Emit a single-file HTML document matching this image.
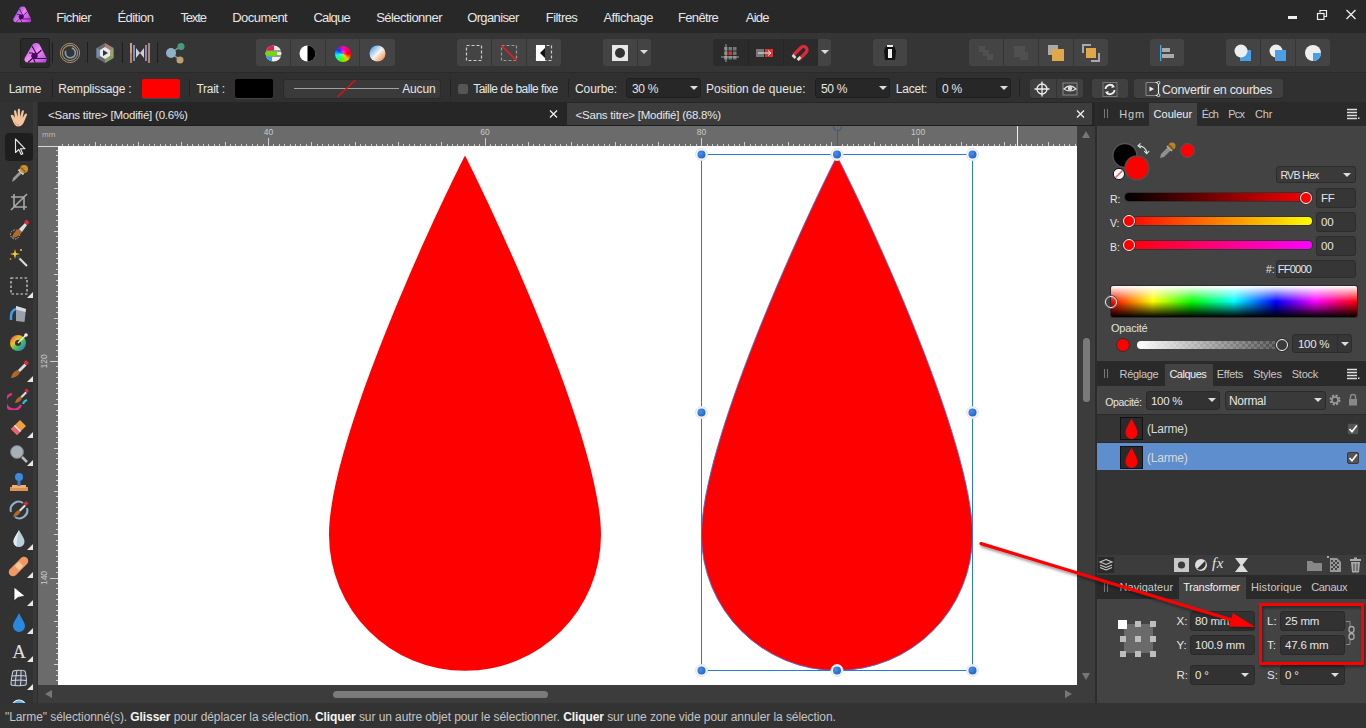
<!DOCTYPE html>
<html><head><meta charset="utf-8">
<style>
*{margin:0;padding:0;box-sizing:border-box}
html,body{width:1366px;height:728px;overflow:hidden;background:#2f2f2f;font-family:"Liberation Sans",sans-serif;color:#e6e6e6}
.a{position:absolute}
.t{position:absolute;white-space:nowrap;font-size:12px;line-height:14px}
#menu{left:0;top:0;width:1366px;height:33px;background:#282828}
#tb{left:0;top:33px;width:1366px;height:40px;background:#353535;border-bottom:1px solid #2a2a2a}
#ctx{left:0;top:73px;width:1366px;height:29px;background:#303030}
#tools{left:0;top:102px;width:37px;height:601px;background:#323232}
#tabs{left:38px;top:102px;width:1057px;height:24px;background:#262626}
#rtop{left:38px;top:126px;width:1039px;height:20px;background:#6b6b6b}
#rleft{left:38px;top:146px;width:20px;height:539px;background:#6b6b6b}
#canvas{left:58px;top:146px;width:1019px;height:539px;background:#fff;overflow:hidden}
#vs{left:1077px;top:126px;width:18px;height:577px;background:#3c3c3c}
#hs{left:38px;top:685px;width:1039px;height:18px;background:#3c3c3c}
#panel{left:1097px;top:102px;width:269px;height:601px;background:#434343}
#status{left:0;top:703px;width:1366px;height:25px;background:#333333}
.btn{position:absolute;background:#454545;border-radius:2px}
.grp{position:absolute;background:#444;border-radius:3px;overflow:hidden}
.dd{position:absolute;background:#272727;border:1px solid #1f1f1f;border-radius:3px}
.sep{position:absolute;width:1px;background:#1e1e1e}
</style></head><body>
<div id="menu" class="a">
  <svg class="a" style="left:11px;top:4px" width="23" height="21" viewBox="0 0 28 26"><defs><linearGradient id="lg" x1="0" y1="0.2" x2="1" y2="0.8"><stop offset="0" stop-color="#5a3ae0"/><stop offset="0.5" stop-color="#f07cf0"/><stop offset="1" stop-color="#b040d8"/></linearGradient></defs>
<path d="M10.5 4.5 Q11.5 3 13.5 3 L15 3 Q16.5 3 17.5 4.5 L24.5 18 Q25.5 20.5 23.5 22.5 L6 22.5 Q3 22.5 2.5 20 Q2 19 3 17.5Z" fill="url(#lg)"/>
<path d="M10 6 L15 15 M19.5 10 L6 22.5 M14 18.5 L24.6 18.5 M7 13 L11 13 M11.4 18.6 L13.2 22.5" stroke="#3a0650" stroke-width="1.1" opacity="0.8"/>
<path d="M10.5 13 L14 13 L16 16 L14 19 L10.5 19 L9 16Z" fill="#3a0860"/></svg>
  <span class="t" style="left:56.2px;top:11px;font-size:13px;letter-spacing:-0.61px">Fichier</span>
  <span class="t" style="left:117.4px;top:11px;font-size:13px;letter-spacing:-0.53px">Édition</span>
  <span class="t" style="left:180.4px;top:11px;font-size:13px;letter-spacing:-1.15px">Texte</span>
  <span class="t" style="left:232.2px;top:11px;font-size:13px;letter-spacing:-0.53px">Document</span>
  <span class="t" style="left:313.4px;top:11px;font-size:13px;letter-spacing:-0.76px">Calque</span>
  <span class="t" style="left:376.2px;top:11px;font-size:13px;letter-spacing:-0.54px">Sélectionner</span>
  <span class="t" style="left:467.2px;top:11px;font-size:13px;letter-spacing:-0.63px">Organiser</span>
  <span class="t" style="left:545.8px;top:11px;font-size:13px;letter-spacing:-0.56px">Filtres</span>
  <span class="t" style="left:603.4px;top:11px;font-size:13px;letter-spacing:-0.49px">Affichage</span>
  <span class="t" style="left:678.0px;top:11px;font-size:13px;letter-spacing:-0.67px">Fenêtre</span>
  <span class="t" style="left:745.8px;top:11px;font-size:13px;letter-spacing:-0.79px">Aide</span>
  <div class="a" style="left:1288px;top:16px;width:9px;height:3px;background:#f0f0f0"></div>
  <svg class="a" style="left:1316px;top:9px" width="12" height="11" viewBox="0 0 12 11"><path d="M4 3.5 V1.5 H10.5 V7.5 H8" fill="none" stroke="#eee" stroke-width="1.2"/><rect x="1.5" y="4.5" width="6.5" height="6" fill="none" stroke="#eee" stroke-width="1.2"/></svg>
  <svg class="a" style="left:1345px;top:9px" width="12" height="11" viewBox="0 0 12 11"><path d="M1.5 1 L10.5 10 M10.5 1 L1.5 10" stroke="#eee" stroke-width="1.3"/></svg>
</div>
<div id="tb" class="a">
  <!-- persona -->
  <div class="a" style="left:20px;top:5px;width:30px;height:30px;background:#2a2a2a;border:1px solid #1f1f1f;border-radius:3px"></div>
  <svg class="a" style="left:22px;top:7px" width="28" height="26" viewBox="0 0 28 26"><defs><linearGradient id="pg" x1="0" y1="0" x2="1" y2="1"><stop offset="0" stop-color="#a040e0"/><stop offset="0.5" stop-color="#f090f0"/><stop offset="1" stop-color="#b040d8"/></linearGradient></defs>
<path d="M10.5 4.5 Q11.5 3 13.5 3 L15 3 Q16.5 3 17.5 4.5 L24.5 18 Q25.5 20.5 23.5 22.5 L6 22.5 Q3 22.5 2.5 20 Q2 19 3 17.5Z" fill="url(#pg)"/>
<path d="M10 6 L15 15 M19.5 10 L6 22.5 M14 18.5 L24.6 18.5 M7 13 L11 13 M11.4 18.6 L13.2 22.5" stroke="#3a0650" stroke-width="1.1"/>
<path d="M10.5 13 L14 13 L16 16 L14 19 L10.5 19 L9 16Z" fill="#4a0a62"/></svg>
  <div class="sep" style="left:52px;top:9px;height:21px"></div>
  <svg class="a" style="left:59px;top:9px" width="22" height="22" viewBox="0 0 22 22"><circle cx="11" cy="11" r="9.6" fill="none" stroke="#b08878" stroke-width="1"/><circle cx="11" cy="11" r="7.6" fill="none" stroke="#9a9460" stroke-width="1.1"/><path d="M6.8 8.8 A5 5 0 1 0 12.8 6" fill="none" stroke="#80a0c0" stroke-width="1.6"/></svg>
  <div class="sep" style="left:87px;top:9px;height:21px"></div>
  <svg class="a" style="left:95px;top:9px" width="20" height="22" viewBox="0 0 20 22"><path d="M10 1 L18.5 6 L18.5 16 L10 21 L1.5 16 L1.5 6Z" fill="#6a6a6a"/><path d="M10 1 L18.5 6 L15 8 L10 5Z" fill="#b07a78"/><path d="M18.5 6 L18.5 16 L15 14 L15 8Z" fill="#a0a070"/><path d="M18.5 16 L10 21 L10 17 L15 14Z" fill="#80a060"/><path d="M1.5 6 L1.5 16 L5 14 L5 8Z" fill="#7090b8"/><path d="M5 8 L10 5 L15 8 L15 14 L10 17 L5 14Z" fill="#e8e8e8"/><path d="M8 8 L13 11 L8 14Z" fill="#333"/></svg>
  <div class="sep" style="left:122px;top:9px;height:21px"></div>
  <svg class="a" style="left:129px;top:9px" width="22" height="22" viewBox="0 0 22 22"><rect x="1" y="1" width="2" height="20" fill="#b88070"/><rect x="1" y="1" width="2" height="10" fill="#c8a090"/><rect x="19" y="1" width="2" height="20" fill="#b88070"/><rect x="4" y="3" width="2" height="16" fill="#8888c0"/><rect x="16" y="3" width="2" height="16" fill="#8888c0"/><path d="M7 6 L11 11 L7 16Z M15 6 L11 11 L15 16Z" fill="#d0d0d0"/></svg>
  <div class="sep" style="left:157px;top:9px;height:21px"></div>
  <svg class="a" style="left:164px;top:9px" width="22" height="22" viewBox="0 0 22 22"><path d="M7 11 L17 4 M7 11 L16 18" stroke="#8aa090" stroke-width="1.5"/><circle cx="7" cy="11" r="5" fill="#90b0c8"/><circle cx="17" cy="4.5" r="3.5" fill="#4a9a80"/><circle cx="16" cy="18" r="3.5" fill="#c0a070"/></svg>

  <!-- color group -->
  <div class="grp" style="left:256px;top:6px;width:139px;height:27px"></div>
  <div class="sep" style="left:290px;top:6px;height:27px;background:#363636"></div>
  <div class="sep" style="left:325px;top:6px;height:27px;background:#363636"></div>
  <div class="sep" style="left:359px;top:6px;height:27px;background:#363636"></div>
  <svg class="a" style="left:265px;top:12px" width="17" height="17" viewBox="0 0 17 17"><defs><clipPath id="cc"><circle cx="8.5" cy="8.5" r="8"/></clipPath></defs><g clip-path="url(#cc)"><rect x="0" y="0" width="17" height="5.5" fill="#eee"/><rect x="0" y="0" width="9" height="5.5" fill="#f01850"/><rect x="0" y="6.5" width="17" height="4" fill="#eee"/><rect x="0" y="6.5" width="12" height="4" fill="#70dd00"/><rect x="0" y="11.5" width="17" height="6" fill="#eee"/><rect x="0" y="11.5" width="7" height="6" fill="#30a0f0"/></g></svg>
  <svg class="a" style="left:299px;top:12px" width="17" height="17" viewBox="0 0 17 17"><circle cx="8.5" cy="8.5" r="8" fill="#fff"/><path d="M8.5 0.5 A8 8 0 0 1 8.5 16.5Z" fill="#000"/></svg>
  <div class="a" style="left:334.5px;top:12.5px;width:16px;height:16px;border-radius:50%;background:radial-gradient(circle,rgba(255,255,255,0.35) 0,rgba(255,255,255,0) 40%),conic-gradient(#ff00c0,#ff0000 25%,#ffc000 38%,#40ff00 55%,#00ffff 72%,#0040ff 85%,#ff00c0)"></div>
  <svg class="a" style="left:369px;top:12px" width="17" height="17" viewBox="0 0 17 17"><defs><linearGradient id="bw" x1="0" y1="0" x2="1" y2="1"><stop offset="0" stop-color="#3090e0"/><stop offset="0.5" stop-color="#f4f4f4"/><stop offset="1" stop-color="#f07820"/></linearGradient></defs><circle cx="8.5" cy="8.5" r="8" fill="url(#bw)"/></svg>

  <!-- selection group -->
  <div class="grp" style="left:457px;top:6px;width:104px;height:27px"></div>
  <div class="sep" style="left:491px;top:6px;height:27px;background:#363636"></div>
  <div class="sep" style="left:526px;top:6px;height:27px;background:#363636"></div>
  <svg class="a" style="left:465px;top:11px" width="18" height="18" viewBox="0 0 18 18"><rect x="1.5" y="1.5" width="15" height="15" fill="none" stroke="#ccc" stroke-width="1.2" stroke-dasharray="3 2"/></svg>
  <svg class="a" style="left:500px;top:11px" width="18" height="18" viewBox="0 0 18 18"><rect x="1.5" y="1.5" width="15" height="15" fill="none" stroke="#999" stroke-width="1.2" stroke-dasharray="3 2"/><path d="M1 1 L17 17" stroke="#e02020" stroke-width="1.6"/></svg>
  <svg class="a" style="left:535px;top:11px" width="18" height="18" viewBox="0 0 18 18"><rect x="1.5" y="1.5" width="15" height="15" fill="none" stroke="#ccc" stroke-width="1.2" stroke-dasharray="3 2"/><rect x="1" y="1" width="9" height="16" fill="#fff"/><path d="M10 4 L5 9 L10 14Z" fill="#111"/></svg>

  <!-- mode group -->
  <div class="grp" style="left:603px;top:6px;width:48px;height:27px"></div>
  <div class="sep" style="left:637px;top:6px;height:27px;background:#363636"></div>
  <svg class="a" style="left:611px;top:11px" width="18" height="18" viewBox="0 0 18 18"><rect x="1" y="1" width="16" height="16" fill="#e8e8e8"/><circle cx="9" cy="9" r="5" fill="#333"/></svg>
  <svg class="a" style="left:640px;top:17px" width="8" height="5" viewBox="0 0 8 5"><path d="M0 0 L8 0 L4 4Z" fill="#ddd"/></svg>

  <!-- snapping group -->
  <div class="grp" style="left:713px;top:6px;width:118px;height:27px;background:#2b2b2b"></div>
  <div class="a" style="left:818px;top:6px;width:13px;height:27px;background:#444;border-radius:0 3px 3px 0"></div>
  <div class="sep" style="left:748px;top:6px;height:27px;background:#262626"></div>
  <div class="sep" style="left:783px;top:6px;height:27px;background:#262626"></div>
  <svg class="a" style="left:721px;top:11px" width="18" height="18" viewBox="0 0 18 18"><g fill="#777"><rect x="3" y="3" width="3.5" height="3.5"/><rect x="7.5" y="3" width="3.5" height="3.5"/><rect x="12" y="3" width="3.5" height="3.5"/><rect x="3" y="7.5" width="3.5" height="3.5"/><rect x="12" y="7.5" width="3.5" height="3.5"/><rect x="3" y="12" width="3.5" height="3.5"/><rect x="7.5" y="12" width="3.5" height="3.5"/><rect x="12" y="12" width="3.5" height="3.5"/></g><rect x="7.5" y="7.5" width="3.5" height="3.5" fill="#e03030"/><path d="M5 0 L5 18 M0 13 L18 13" stroke="#bbb" stroke-width="0.8"/></svg>
  <svg class="a" style="left:755px;top:12px" width="20" height="16" viewBox="0 0 20 16"><rect x="1" y="4" width="8" height="8" fill="#777"/><rect x="10" y="4" width="8" height="8" fill="#e03030"/><path d="M3 8 L15 8" stroke="#eee" stroke-width="1"/><path d="M13 5.5 L16 8 L13 10.5" fill="none" stroke="#eee" stroke-width="1"/></svg>
  <svg class="a" style="left:791px;top:11px" width="19" height="19" viewBox="0 0 19 19"><path d="M3.5 14 L11 6.5 A3.5 3.5 0 0 1 16 11.5 L8.5 19" fill="none" stroke="#e02838" stroke-width="3.2" transform="translate(-1,-3)"/><path d="M2 12.5 L5 15.5 M7 17.5 L10 14.5" stroke="#ddd" stroke-width="2.5" transform="translate(-0.5,-1.5)"/></svg>
  <svg class="a" style="left:821px;top:17px" width="8" height="5" viewBox="0 0 8 5"><path d="M0 0 L8 0 L4 4Z" fill="#ddd"/></svg>

  <div class="grp" style="left:873px;top:6px;width:34px;height:27px"></div>
  <svg class="a" style="left:882px;top:10px" width="16" height="19" viewBox="0 0 16 19"><path d="M4 3 L12 3 L14 8 L13 17 L3 17 L2 8Z" fill="#111"/><path d="M5 2 L11 2 L11 4 L5 4Z" fill="#eee"/><path d="M6 6 L10 6 L10 15 L6 15Z" fill="#eee"/></svg>

  <!-- arrange group -->
  <div class="grp" style="left:969px;top:6px;width:139px;height:27px"></div>
  <div class="sep" style="left:1003px;top:6px;height:27px;background:#363636"></div>
  <div class="sep" style="left:1038px;top:6px;height:27px;background:#363636"></div>
  <div class="sep" style="left:1073px;top:6px;height:27px;background:#363636"></div>
  <svg class="a" style="left:977px;top:11px" width="18" height="18" viewBox="0 0 18 18"><g fill="#505050"><rect x="2" y="2" width="6" height="6"/><rect x="6" y="6" width="6" height="6"/><rect x="10" y="10" width="6" height="6"/></g></svg>
  <svg class="a" style="left:1012px;top:11px" width="18" height="18" viewBox="0 0 18 18"><g fill="#505050"><rect x="2" y="2" width="11" height="11"/><rect x="8" y="8" width="8" height="8"/></g></svg>
  <svg class="a" style="left:1047px;top:11px" width="18" height="18" viewBox="0 0 18 18"><rect x="1" y="1" width="10" height="10" fill="#aaa"/><rect x="5" y="5" width="12" height="12" fill="#e0a848"/></svg>
  <svg class="a" style="left:1082px;top:11px" width="18" height="18" viewBox="0 0 18 18"><path d="M1 9 L1 1 L9 1" fill="none" stroke="#aaa" stroke-width="2"/><path d="M17 9 L17 17 L9 17" fill="none" stroke="#aaa" stroke-width="2"/><rect x="4" y="4" width="10" height="10" fill="#e0a848"/></svg>

  <div class="grp" style="left:1150px;top:6px;width:34px;height:27px"></div>
  <svg class="a" style="left:1159px;top:11px" width="16" height="18" viewBox="0 0 16 18"><rect x="1" y="1" width="1.3" height="16" fill="#4aa8e8"/><rect x="3" y="4" width="8" height="4" fill="#aaa"/><rect x="3" y="10" width="12" height="4" fill="#aaa"/></svg>

  <!-- boolean group -->
  <div class="grp" style="left:1226px;top:6px;width:104px;height:27px"></div>
  <div class="sep" style="left:1260px;top:6px;height:27px;background:#363636"></div>
  <div class="sep" style="left:1295px;top:6px;height:27px;background:#363636"></div>
  <svg class="a" style="left:1234px;top:11px" width="18" height="18" viewBox="0 0 18 18"><rect x="6" y="6" width="11" height="11" fill="#4aa0e8"/><circle cx="7" cy="7" r="6.5" fill="#eee"/></svg>
  <svg class="a" style="left:1269px;top:11px" width="18" height="18" viewBox="0 0 18 18"><circle cx="7" cy="7" r="6.5" fill="#eee"/><rect x="6" y="6" width="11" height="11" fill="#4aa0e8"/></svg>
  <svg class="a" style="left:1304px;top:11px" width="18" height="18" viewBox="0 0 18 18"><circle cx="9" cy="9" r="8" fill="#eee"/><path d="M9 9 L17 9 A8 8 0 0 1 9 17Z" fill="#4aa0e8"/></svg>
</div>
<div id="ctx" class="a">
  <span class="t" style="left:8.8px;top:9px;font-size:12px;letter-spacing:-0.35px">Larme</span>
  <div class="sep" style="left:52px;top:6px;height:18px;background:#222"></div>
  <span class="t" style="left:58.2px;top:9px;font-size:12px;letter-spacing:-0.21px">Remplissage :</span>
  <div class="a" style="left:142px;top:6px;width:38px;height:19px;background:#ff0000;border-radius:2px;box-shadow:0 1px 0 #444"></div>
  <div class="sep" style="left:189px;top:6px;height:18px;background:#222"></div>
  <span class="t" style="left:196.4px;top:9px;font-size:12px;letter-spacing:-0.26px">Trait :</span>
  <div class="a" style="left:235px;top:6px;width:38px;height:19px;background:#000;border-radius:2px;box-shadow:0 1px 0 #444"></div>
  <div class="a" style="left:283px;top:6px;width:158px;height:20px;background:#3a3a3a;border:1px solid #2a2a2a;border-radius:3px"></div>
  <div class="a" style="left:294px;top:15px;width:105px;height:1px;background:#a0a0a0"></div>
  <svg class="a" style="left:336px;top:6px" width="21" height="19" viewBox="0 0 21 19"><path d="M1.5 18 L19.5 1" stroke="#e01010" stroke-width="1.5"/></svg>
  <span class="t" style="left:402.2px;top:9px;font-size:12px;letter-spacing:-0.15px">Aucun</span>
  <div class="sep" style="left:450px;top:6px;height:18px;background:#222"></div>
  <div class="a" style="left:458px;top:11px;width:10px;height:10px;background:#555;border-radius:2px"></div>
  <span class="t" style="left:473.2px;top:9px;font-size:12px;letter-spacing:-0.51px">Taille de balle fixe</span>
  <div class="sep" style="left:568px;top:6px;height:18px;background:#222"></div>
  <span class="t" style="left:575.0px;top:9px;font-size:12px;letter-spacing:-0.09px">Courbe:</span>
  <div class="dd" style="left:626px;top:5px;width:75px;height:20px"></div>
  <span class="t" style="left:632px;top:9px;font-size:12px;letter-spacing:-0.3px">30 %</span>
  <svg class="a" style="left:690px;top:13px" width="8" height="5" viewBox="0 0 8 5"><path d="M0 0 L8 0 L4 4Z" fill="#ddd"/></svg>
  <span class="t" style="left:706.0px;top:9px;font-size:12px;letter-spacing:0.01px">Position de queue:</span>
  <div class="dd" style="left:815px;top:5px;width:75px;height:20px"></div>
  <span class="t" style="left:821px;top:9px;font-size:12px;letter-spacing:-0.3px">50 %</span>
  <svg class="a" style="left:879px;top:13px" width="8" height="5" viewBox="0 0 8 5"><path d="M0 0 L8 0 L4 4Z" fill="#ddd"/></svg>
  <span class="t" style="left:895.8px;top:9px;font-size:12px;letter-spacing:-0.22px">Lacet:</span>
  <div class="dd" style="left:936px;top:5px;width:75px;height:20px"></div>
  <span class="t" style="left:942px;top:9px;font-size:12px;letter-spacing:-0.3px">0 %</span>
  <svg class="a" style="left:1000px;top:13px" width="8" height="5" viewBox="0 0 8 5"><path d="M0 0 L8 0 L4 4Z" fill="#ddd"/></svg>
  <div class="sep" style="left:1019px;top:6px;height:18px;background:#222"></div>
  <div class="grp" style="left:1030px;top:6px;width:53px;height:19px;background:#404040;box-shadow:0 1px 0 #2a2a2a"></div>
  <div class="sep" style="left:1056px;top:6px;height:20px;background:#333"></div>
  <svg class="a" style="left:1034px;top:8px" width="16" height="16" viewBox="0 0 16 16"><circle cx="8" cy="8" r="5" fill="none" stroke="#eee" stroke-width="1.3"/><path d="M8 0.5 L8 15.5 M0.5 8 L15.5 8" stroke="#eee" stroke-width="1.3"/></svg>
  <svg class="a" style="left:1061px;top:8px" width="18" height="16" viewBox="0 0 18 16"><rect x="2" y="2" width="14" height="12" fill="none" stroke="#888" stroke-width="1"/><path d="M3 8 Q9 2 15 8 Q9 12 3 8Z" fill="#333" stroke="#ddd" stroke-width="1.2"/><circle cx="9" cy="7.5" r="2.2" fill="#ddd"/></svg>
  <div class="grp" style="left:1092px;top:6px;width:36px;height:19px;background:#404040;box-shadow:0 1px 0 #2a2a2a"></div>
  <svg class="a" style="left:1101px;top:8px" width="18" height="17" viewBox="0 0 18 17"><rect x="2" y="1.5" width="14" height="14" fill="none" stroke="#777" stroke-width="1"/><path d="M4.5 8 A4.5 4.5 0 0 1 12.5 5.5 M13.5 9 A4.5 4.5 0 0 1 5.5 11.5" fill="none" stroke="#eee" stroke-width="1.8"/><path d="M11 3 L14 6 L10.5 7Z M7 14 L4 11 L7.5 10Z" fill="#eee"/></svg>
  <div class="grp" style="left:1134px;top:6px;width:149px;height:19px;background:#404040;box-shadow:0 1px 0 #2a2a2a"></div>
  <svg class="a" style="left:1144px;top:8px" width="17" height="16" viewBox="0 0 17 16"><path d="M11.5 1.5 H2 V14.5 H11.5" fill="none" stroke="#888" stroke-width="1"/><path d="M11.5 1.5 H14.5 V14.5 H11.5" fill="none" stroke="#f0f0f0" stroke-width="1.1"/><circle cx="14.5" cy="1.8" r="1.4" fill="#333" stroke="#f0f0f0" stroke-width="0.9"/><circle cx="14.5" cy="14.2" r="1.4" fill="#333" stroke="#f0f0f0" stroke-width="0.9"/><path d="M5.5 5.5 L10 8 L5.5 10.5Z" fill="#f0f0f0"/></svg>
  <span class="t" style="left:1162.0px;top:10px;font-size:12.5px;letter-spacing:-0.30px">Convertir en courbes</span>
</div>
<div id="tools" class="a" style="overflow:hidden"><div class="a" style="left:5px;top:31px;width:28px;height:28px;background:#1e1e1e;border-radius:4px"></div>
<div class="a" style="left:33px;top:0;width:5px;height:601px;background:#383838"></div>
<div class="a" style="left:37px;top:0;width:1px;height:601px;background:#262626"></div>
<svg class="a" style="left:7px;top:4px" width="24" height="24" viewBox="0 0 24 24"><path d="M5.5 14 C4.5 11.5 3 9.5 4.5 8.8 C6 8.2 7 10 8 12 L7 5.5 C6.8 4 8.8 3.6 9.2 5.2 L10.5 11 L10.8 3.8 C10.8 2.3 13 2.3 13 3.8 L13 11 L14.8 5 C15.2 3.6 17.2 4 16.9 5.5 L15.5 12 L18 8 C18.8 6.8 20.5 7.6 19.9 9 L17 16 C15.8 19 13.5 20.5 10.8 20.5 C8.5 20.5 6.5 17.5 5.5 14Z" fill="#f4c49c"/><path d="M8 16 C9 18 10.5 19 12 19" stroke="#d89870" fill="none" stroke-width="0.8"/></svg>
<svg class="a" style="left:7px;top:32px" width="24" height="24" viewBox="0 0 24 24"><path d="M8.5 5 L8.5 18.5 L11.8 15.5 L14.2 20.5 L15.8 19.8 L13.5 14.8 L18 14.8Z" fill="#1e1e1e" stroke="#e8e8e8" stroke-width="1.1" stroke-linejoin="round"/></svg>
<svg class="a" style="left:7px;top:60px" width="24" height="24" viewBox="0 0 24 24"><path d="M5 20 L6 16 L13 9 L15 11 L8 18Z" fill="#9a9a9a"/><path d="M11.5 7.5 L16.5 12.5" stroke="#ccc" stroke-width="2"/><circle cx="17" cy="7" r="4" fill="#c89030"/><path d="M14 5.5 L18.5 10" stroke="#906010" stroke-width="1.5"/></svg>
<svg class="a" style="left:7px;top:88px" width="24" height="24" viewBox="0 0 24 24"><path d="M7 4 V17 H20 M4 7 H17 V20 M4 20 L20 4" fill="none" stroke="#a8a8a8" stroke-width="1.6"/></svg>
<svg class="a" style="left:7px;top:116px" width="24" height="24" viewBox="0 0 24 24"><circle cx="8" cy="16.5" r="4.5" fill="none" stroke="#bbb" stroke-width="1" stroke-dasharray="1.5 1.2"/><path d="M5 20 C6 15 9 12 12 11 L15 14 C13 17 10 19.5 5 20Z" fill="#b06a28"/><path d="M12 11 L18 5 L20 7 L15 14Z" fill="#ddd"/><path d="M17 4 L19.5 1.5 L22.5 4.5 L20 7Z" fill="#e02838"/></svg>
<svg class="a" style="left:7px;top:144px" width="24" height="24" viewBox="0 0 24 24"><path d="M10 10 L20 20" stroke="#444" stroke-width="2.5"/><path d="M12.5 12.5 L20 20" stroke="#ddd" stroke-width="2"/><path d="M8 3 L9 7 L13 8 L9 9 L8 13 L7 9 L3 8 L7 7Z" fill="#f8c830"/><circle cx="14" cy="4" r="1" fill="#f8c830"/><circle cx="3.5" cy="13" r="0.8" fill="#f8c830"/></svg>
<svg class="a" style="left:7px;top:172px" width="24" height="24" viewBox="0 0 24 24"><rect x="4" y="4" width="16" height="16" fill="none" stroke="#ddd" stroke-width="1.2" stroke-dasharray="2.5 2"/></svg><svg class="a" style="left:27px;top:190px" width="6" height="6" viewBox="0 0 6 6"><path d="M6 0 L6 6 L0 6Z" fill="#e8e8e8"/></svg>
<svg class="a" style="left:7px;top:200px" width="24" height="24" viewBox="0 0 24 24"><path d="M9 4 L19 7 L17.5 20 L9 19 Z" fill="#9aa0a8"/><path d="M9 4 L19 7 L18.5 10 L9 7.5Z" fill="#d8dce0"/><path d="M9 7 C5 8 3.5 12 4 18" fill="none" stroke="#3aa0e8" stroke-width="2.5"/></svg>
<svg class="a" style="left:7px;top:228px" width="24" height="24" viewBox="0 0 24 24"><circle cx="11" cy="13" r="8" fill="url(#cw)"/><defs><linearGradient id="cw" x1="0" y1="0" x2="1" y2="1"><stop offset="0" stop-color="#f03080"/><stop offset="0.35" stop-color="#f0c020"/><stop offset="0.6" stop-color="#40c060"/><stop offset="1" stop-color="#3060f0"/></linearGradient></defs><circle cx="11" cy="13" r="3" fill="#333"/><path d="M11 13 L19 5" stroke="#eee" stroke-width="1.5"/><circle cx="19" cy="5" r="1.8" fill="#eee"/></svg>
<svg class="a" style="left:7px;top:256px" width="24" height="24" viewBox="0 0 24 24"><path d="M4 20 C5 15 8 12.5 11 12 L13 14 C12 17 9 19.5 4 20Z" fill="#b06a28"/><path d="M11 12 L17.5 5.5 L19.5 7.5 L13 14Z" fill="#ddd"/><path d="M16.5 4.5 L19 2 L22 5 L19.5 7.5Z" fill="#e02838"/></svg><svg class="a" style="left:27px;top:274px" width="6" height="6" viewBox="0 0 6 6"><path d="M6 0 L6 6 L0 6Z" fill="#e8e8e8"/></svg>
<svg class="a" style="left:7px;top:284px" width="24" height="24" viewBox="0 0 24 24"><path d="M14 19 A8 8 0 1 1 5 8" fill="none" stroke="#e03090" stroke-width="2.5"/><path d="M16 18 A6 6 0 0 1 20 14" fill="none" stroke="#30c0e0" stroke-width="2"/><path d="M8 17 C9 13 11 11 13.5 10.5 L15 12 C14 15 12 16.5 8 17Z" fill="#b06a28"/><path d="M13.5 10.5 L18.5 5.5 L20 7 L15 12Z" fill="#ddd"/><path d="M17.5 4.5 L19.5 2.5 L22 5 L20 7Z" fill="#e02838"/></svg>
<svg class="a" style="left:7px;top:312px" width="24" height="24" viewBox="0 0 24 24"><path d="M4 15 L13 6 L19 12 L10 21Z" fill="#f0a040"/><path d="M4 15 L8 11 L14 17 L10 21Z" fill="#f06070"/><path d="M7.5 11.5 L13.5 17.5" stroke="#fff" stroke-width="1.2"/></svg><svg class="a" style="left:27px;top:330px" width="6" height="6" viewBox="0 0 6 6"><path d="M6 0 L6 6 L0 6Z" fill="#e8e8e8"/></svg>
<svg class="a" style="left:7px;top:340px" width="24" height="24" viewBox="0 0 24 24"><circle cx="10" cy="10" r="6.5" fill="#a8b0b8"/><circle cx="10" cy="10" r="6.5" fill="none" stroke="#707880" stroke-width="1"/><path d="M15 15 L20 20" stroke="#bbb" stroke-width="2.5"/></svg><svg class="a" style="left:27px;top:358px" width="6" height="6" viewBox="0 0 6 6"><path d="M6 0 L6 6 L0 6Z" fill="#e8e8e8"/></svg>
<svg class="a" style="left:7px;top:368px" width="24" height="24" viewBox="0 0 24 24"><rect x="3" y="17" width="18" height="4" fill="#e09050"/><rect x="5" y="15" width="14" height="3" fill="#f0b070"/><rect x="10.5" y="9" width="3" height="7" fill="#3a7ac0"/><circle cx="12" cy="7" r="4" fill="#3a8ae0"/></svg>
<svg class="a" style="left:7px;top:396px" width="24" height="24" viewBox="0 0 24 24"><path d="M4 14 A8 8 0 0 1 16 5" fill="none" stroke="#90b0d0" stroke-width="2"/><path d="M20 10 A8 8 0 0 1 8 19" fill="none" stroke="#90b0d0" stroke-width="2"/><path d="M6 19 C7 15 9 13 12 12 L13.5 13.5 C12.5 16.5 10 18.5 6 19Z" fill="#b06a28"/><path d="M12 12 L17.5 6.5 L19 8 L13.5 13.5Z" fill="#ddd"/><path d="M16.5 5.5 L19 3 L21.5 5.5 L19 8Z" fill="#e02838"/></svg>
<svg class="a" style="left:7px;top:424px" width="24" height="24" viewBox="0 0 24 24"><path d="M12 4 C10 8 6.5 12 6.5 15.5 A5.5 5.5 0 0 0 17.5 15.5 C17.5 12 14 8 12 4Z" fill="#b8d0dc"/><path d="M12 4 C10 8 6.5 12 6.5 15.5 A5.5 5.5 0 0 0 10 20.5 C9 16 11 10 12 4Z" fill="#e0eef4"/></svg><svg class="a" style="left:27px;top:442px" width="6" height="6" viewBox="0 0 6 6"><path d="M6 0 L6 6 L0 6Z" fill="#e8e8e8"/></svg>
<svg class="a" style="left:7px;top:452px" width="24" height="24" viewBox="0 0 24 24"><path d="M3 15 L14 4 A4 4 0 0 1 20 10 L9 21 A4 4 0 0 1 3 15Z" fill="#f09860"/><rect x="9" y="9" width="6" height="6" transform="rotate(45 12 12)" fill="#f8c8a0"/></svg><svg class="a" style="left:27px;top:470px" width="6" height="6" viewBox="0 0 6 6"><path d="M6 0 L6 6 L0 6Z" fill="#e8e8e8"/></svg>
<svg class="a" style="left:7px;top:480px" width="24" height="24" viewBox="0 0 24 24"><path d="M7 5 L7 19 L11 15.5 L18 14Z" fill="#fff" stroke="#222" stroke-width="0.8"/></svg><svg class="a" style="left:27px;top:498px" width="6" height="6" viewBox="0 0 6 6"><path d="M6 0 L6 6 L0 6Z" fill="#e8e8e8"/></svg>
<svg class="a" style="left:7px;top:508px" width="24" height="24" viewBox="0 0 24 24"><path d="M12 3 C10 8 6 12 6 16 A6 6 0 0 0 18 16 C18 12 14 8 12 3Z" fill="#2a88e0"/></svg><svg class="a" style="left:27px;top:526px" width="6" height="6" viewBox="0 0 6 6"><path d="M6 0 L6 6 L0 6Z" fill="#e8e8e8"/></svg>
<svg class="a" style="left:7px;top:536px" width="24" height="24" viewBox="0 0 24 24"><text x="12" y="20" font-family="Liberation Serif" font-size="19" fill="#e0e0e0" text-anchor="middle">A</text></svg><svg class="a" style="left:27px;top:554px" width="6" height="6" viewBox="0 0 6 6"><path d="M6 0 L6 6 L0 6Z" fill="#e8e8e8"/></svg>
<svg class="a" style="left:7px;top:564px" width="24" height="24" viewBox="0 0 24 24"><path d="M6 5 C10 4 15 4 18 5 C19 9 20 14 19 19 C14 20 9 20 4 19 C4 14 5 9 6 5Z" fill="#3a4050" stroke="#d8d8d8" stroke-width="1"/><path d="M5 10 C10 9.5 15 9.5 19 10 M4.5 14.5 C10 14 15 14 19.5 14.5 M10 4.5 C9 9 8.5 14 8 19.5 M14 4.5 C14 9 14 14 13.5 19.8" fill="none" stroke="#d8d8d8" stroke-width="1"/></svg><svg class="a" style="left:27px;top:582px" width="6" height="6" viewBox="0 0 6 6"><path d="M6 0 L6 6 L0 6Z" fill="#e8e8e8"/></svg>
<svg class="a" style="left:7px;top:592px" width="24" height="24" viewBox="0 0 24 24"><path d="M5 13 A7 7 0 0 1 19 13Z" fill="#5ab0f0" stroke="#eee" stroke-width="1.2"/></svg></div>
<div id="tabs" class="a">
  <div class="a" style="left:529px;top:1px;width:525px;height:22px;background:#3d3d3d"></div>
  <span class="t" style="left:10.0px;top:6px;font-size:11.5px;letter-spacing:-0.21px">&lt;Sans titre&gt; [Modifié] (0.6%)</span>
  <svg class="a" style="left:511px;top:8px" width="9" height="8" viewBox="0 0 9 8"><path d="M1 0.5 L8 7.5 M8 0.5 L1 7.5" stroke="#eee" stroke-width="1.3"/></svg>
  <span class="t" style="left:537.6px;top:6px;font-size:11.5px;letter-spacing:-0.23px">&lt;Sans titre&gt; [Modifié] (68.8%)</span>
  <svg class="a" style="left:1038px;top:8px" width="9" height="8" viewBox="0 0 9 8"><path d="M1 0.5 L8 7.5 M8 0.5 L1 7.5" stroke="#eee" stroke-width="1.3"/></svg>
  <div class="a" style="left:0;top:23px;width:1057px;height:1px;background:#1e1e1e"></div>
</div>
<div id="rtop" class="a"><svg class="a" style="left:0;top:0" width="1039" height="20"><path d="M24.5 18V20 M30.5 18V20 M35.5 18V20 M40.5 18V20 M46.5 18V20 M51.5 18V20 M57.5 16V20 M62.5 18V20 M67.5 18V20 M73.5 18V20 M78.5 18V20 M84.5 18V20 M89.5 18V20 M95.5 18V20 M100.5 16V20 M105.5 18V20 M111.5 18V20 M116.5 18V20 M122.5 18V20 M127.5 18V20 M132.5 18V20 M138.5 18V20 M143.5 16V20 M149.5 18V20 M154.5 18V20 M160.5 18V20 M165.5 18V20 M170.5 18V20 M176.5 18V20 M181.5 18V20 M187.5 16V20 M192.5 18V20 M197.5 18V20 M203.5 18V20 M208.5 18V20 M214.5 18V20 M219.5 18V20 M225.5 18V20 M230.5 12V20 M235.5 18V20 M241.5 18V20 M246.5 18V20 M252.5 18V20 M257.5 18V20 M262.5 18V20 M268.5 18V20 M273.5 16V20 M279.5 18V20 M284.5 18V20 M290.5 18V20 M295.5 18V20 M300.5 18V20 M306.5 18V20 M311.5 18V20 M317.5 16V20 M322.5 18V20 M327.5 18V20 M333.5 18V20 M338.5 18V20 M344.5 18V20 M349.5 18V20 M354.5 18V20 M360.5 16V20 M365.5 18V20 M371.5 18V20 M376.5 18V20 M382.5 18V20 M387.5 18V20 M392.5 18V20 M398.5 18V20 M403.5 16V20 M409.5 18V20 M414.5 18V20 M419.5 18V20 M425.5 18V20 M430.5 18V20 M436.5 18V20 M441.5 18V20 M447.5 12V20 M452.5 18V20 M457.5 18V20 M463.5 18V20 M468.5 18V20 M474.5 18V20 M479.5 18V20 M484.5 18V20 M490.5 16V20 M495.5 18V20 M501.5 18V20 M506.5 18V20 M512.5 18V20 M517.5 18V20 M522.5 18V20 M528.5 18V20 M533.5 16V20 M539.5 18V20 M544.5 18V20 M549.5 18V20 M555.5 18V20 M560.5 18V20 M566.5 18V20 M571.5 18V20 M577.5 16V20 M582.5 18V20 M587.5 18V20 M593.5 18V20 M598.5 18V20 M604.5 18V20 M609.5 18V20 M614.5 18V20 M620.5 16V20 M625.5 18V20 M631.5 18V20 M636.5 18V20 M641.5 18V20 M647.5 18V20 M652.5 18V20 M658.5 18V20 M663.5 12V20 M669.5 18V20 M674.5 18V20 M679.5 18V20 M685.5 18V20 M690.5 18V20 M696.5 18V20 M701.5 18V20 M706.5 16V20 M712.5 18V20 M717.5 18V20 M723.5 18V20 M728.5 18V20 M734.5 18V20 M739.5 18V20 M744.5 18V20 M750.5 16V20 M755.5 18V20 M761.5 18V20 M766.5 18V20 M771.5 18V20 M777.5 18V20 M782.5 18V20 M788.5 18V20 M793.5 16V20 M799.5 18V20 M804.5 18V20 M809.5 18V20 M815.5 18V20 M820.5 18V20 M826.5 18V20 M831.5 18V20 M836.5 16V20 M842.5 18V20 M847.5 18V20 M853.5 18V20 M858.5 18V20 M864.5 18V20 M869.5 18V20 M874.5 18V20 M880.5 12V20 M885.5 18V20 M891.5 18V20 M896.5 18V20 M901.5 18V20 M907.5 18V20 M912.5 18V20 M918.5 18V20 M923.5 16V20 M928.5 18V20 M934.5 18V20 M939.5 18V20 M945.5 18V20 M950.5 18V20 M956.5 18V20 M961.5 18V20 M966.5 16V20 M972.5 18V20 M977.5 18V20 M983.5 18V20 M988.5 18V20 M993.5 18V20 M999.5 18V20 M1004.5 18V20 M1010.5 16V20 M1015.5 18V20 M1021.5 18V20 M1026.5 18V20 M1031.5 18V20 M1037.5 18V20" stroke="#cfcfcf" stroke-width="1" fill="none"/><text x="230.4" y="9" fill="#c8c8c8" font-size="8.5" text-anchor="middle" font-family="Liberation Sans">40</text><text x="447.0" y="9" fill="#c8c8c8" font-size="8.5" text-anchor="middle" font-family="Liberation Sans">60</text><text x="663.6" y="9" fill="#c8c8c8" font-size="8.5" text-anchor="middle" font-family="Liberation Sans">80</text><text x="880.2" y="9" fill="#c8c8c8" font-size="8.5" text-anchor="middle" font-family="Liberation Sans">100</text><text x="4" y="11" fill="#b8b8b8" font-size="8" font-family="Liberation Sans">mm</text><path d="M795.5 0.5 A4 4 0 0 0 803.5 0.5" fill="none" stroke="#3e5a80" stroke-width="1.2"/><path d="M799.5 4.5 V20" stroke="#3e5a80" stroke-width="1"/><path d="M979.5 0 V20" stroke="#f0f0f0" stroke-width="1"/></svg></div>
<div id="rleft" class="a"><div class="a" style="left:0;top:0;width:20px;height:1px;background:#d8d8d8"></div><svg class="a" style="left:0;top:0" width="20" height="539"><path d="M18 4.5H20 M18 9.5H20 M18 15.5H20 M18 20.5H20 M18 25.5H20 M18 31.5H20 M18 36.5H20 M16 42.5H20 M18 47.5H20 M18 52.5H20 M18 58.5H20 M18 63.5H20 M18 69.5H20 M18 74.5H20 M18 80.5H20 M16 85.5H20 M18 90.5H20 M18 96.5H20 M18 101.5H20 M18 107.5H20 M18 112.5H20 M18 117.5H20 M18 123.5H20 M16 128.5H20 M18 134.5H20 M18 139.5H20 M18 145.5H20 M18 150.5H20 M18 155.5H20 M18 161.5H20 M18 166.5H20 M16 172.5H20 M18 177.5H20 M18 182.5H20 M18 188.5H20 M18 193.5H20 M18 199.5H20 M18 204.5H20 M18 210.5H20 M12 215.5H20 M18 220.5H20 M18 226.5H20 M18 231.5H20 M18 237.5H20 M18 242.5H20 M18 247.5H20 M18 253.5H20 M16 258.5H20 M18 264.5H20 M18 269.5H20 M18 275.5H20 M18 280.5H20 M18 285.5H20 M18 291.5H20 M18 296.5H20 M16 302.5H20 M18 307.5H20 M18 312.5H20 M18 318.5H20 M18 323.5H20 M18 329.5H20 M18 334.5H20 M18 339.5H20 M16 345.5H20 M18 350.5H20 M18 356.5H20 M18 361.5H20 M18 367.5H20 M18 372.5H20 M18 377.5H20 M18 383.5H20 M16 388.5H20 M18 394.5H20 M18 399.5H20 M18 404.5H20 M18 410.5H20 M18 415.5H20 M18 421.5H20 M18 426.5H20 M12 432.5H20 M18 437.5H20 M18 442.5H20 M18 448.5H20 M18 453.5H20 M18 459.5H20 M18 464.5H20 M18 469.5H20 M16 475.5H20 M18 480.5H20 M18 486.5H20 M18 491.5H20 M18 497.5H20 M18 502.5H20 M18 507.5H20 M18 513.5H20 M16 518.5H20 M18 524.5H20 M18 529.5H20 M18 534.5H20" stroke="#cfcfcf" stroke-width="1" fill="none"/><text x="0" y="0" transform="translate(9,215.4) rotate(-90)" fill="#c8c8c8" font-size="8.5" text-anchor="middle" font-family="Liberation Sans">120</text><text x="0" y="0" transform="translate(9,432.0) rotate(-90)" fill="#c8c8c8" font-size="8.5" text-anchor="middle" font-family="Liberation Sans">140</text></svg></div>
<div id="canvas" class="a">
  <svg class="a" style="left:0;top:0" width="1019" height="539" viewBox="58 146 1019 539">
    <path id="drop1" fill="#ff0000" d="M465 155.5 C426.2 232.2 329 445 329 534.9 A136 136 0 0 0 601 534.9 C601 445 503.8 232.2 465 155.5Z"/>
    <path fill="#ff0000" stroke="#4a70d8" stroke-width="0.9" d="M837 156 C798.2 232.7 701.5 444.5 701.5 535 A135.5 135.5 0 0 0 972.5 535 C972.5 444.5 875.8 232.7 837 156Z"/><rect x="701.5" y="154.5" width="271" height="516" fill="none" stroke="#2a7ae0" stroke-width="1"/><defs><radialGradient id="hg" cx="0.35" cy="0.35" r="0.8"><stop offset="0" stop-color="#4a90e8"/><stop offset="1" stop-color="#1a60c8"/></radialGradient></defs><circle cx="701.5" cy="154.5" r="6" fill="#f4f4f4" stroke="#e4e4e4" stroke-width="1"/><circle cx="701.5" cy="154.5" r="4" fill="url(#hg)"/><circle cx="837.0" cy="154.5" r="6" fill="#f4f4f4" stroke="#e4e4e4" stroke-width="1"/><circle cx="837.0" cy="154.5" r="4" fill="url(#hg)"/><circle cx="972.5" cy="154.5" r="6" fill="#f4f4f4" stroke="#e4e4e4" stroke-width="1"/><circle cx="972.5" cy="154.5" r="4" fill="url(#hg)"/><circle cx="701.5" cy="412.5" r="6" fill="#f4f4f4" stroke="#e4e4e4" stroke-width="1"/><circle cx="701.5" cy="412.5" r="4" fill="url(#hg)"/><circle cx="972.5" cy="412.5" r="6" fill="#f4f4f4" stroke="#e4e4e4" stroke-width="1"/><circle cx="972.5" cy="412.5" r="4" fill="url(#hg)"/><circle cx="701.5" cy="670.5" r="6" fill="#f4f4f4" stroke="#e4e4e4" stroke-width="1"/><circle cx="701.5" cy="670.5" r="4" fill="url(#hg)"/><circle cx="837.0" cy="670.5" r="6" fill="#f4f4f4" stroke="#e4e4e4" stroke-width="1"/><circle cx="837.0" cy="670.5" r="4" fill="url(#hg)"/><circle cx="972.5" cy="670.5" r="6" fill="#f4f4f4" stroke="#e4e4e4" stroke-width="1"/><circle cx="972.5" cy="670.5" r="4" fill="url(#hg)"/></svg>
</div>
<div id="vs" class="a">
  <svg class="a" style="left:5px;top:5px" width="8" height="7" viewBox="0 0 8 7"><path d="M0 7 L8 7 L4 0Z" fill="#777"/></svg>
  <div class="a" style="left:6px;top:212px;width:7px;height:64px;background:#7a7a7a;border-radius:4px"></div>
  <svg class="a" style="left:5px;top:547px" width="8" height="7" viewBox="0 0 8 7"><path d="M0 0 L8 0 L4 7Z" fill="#777"/></svg>
  <div class="a" style="left:18px;top:-24px;width:2px;height:601px;background:#2c2c2c"></div>
</div>
<div id="hs" class="a">
  <svg class="a" style="left:7px;top:5px" width="7" height="8" viewBox="0 0 7 8"><path d="M7 0 L7 8 L0 4Z" fill="#777"/></svg>
  <div class="a" style="left:295px;top:6px;width:215px;height:7px;background:#7a7a7a;border-radius:4px"></div>
  <svg class="a" style="left:1027px;top:5px" width="7" height="8" viewBox="0 0 7 8"><path d="M0 0 L0 8 L7 4Z" fill="#777"/></svg>
</div>
<div id="panel" class="a"><div class="a" style="left:0;top:0;width:269px;height:24px;background:#2a2a2a"></div>
<div class="a" style="left:7px;top:7px;width:1px;height:9px;background:#777"></div><div class="a" style="left:10px;top:7px;width:1px;height:9px;background:#777"></div>
<div class="a" style="left:52px;top:1px;width:48px;height:23px;background:#434343"></div>
<span class="t" style="left:22.2px;top:4.5px;font-size:11px;color:#c8c8c8;letter-spacing:0.90px">Hgm</span>
<span class="t" style="left:56.6px;top:4.5px;font-size:11px;color:#f0f0f0;letter-spacing:-0.00px">Couleur</span>
<span class="t" style="left:104.8px;top:4.5px;font-size:11px;color:#c8c8c8;letter-spacing:-1.00px">Éch</span>
<span class="t" style="left:131.2px;top:4.5px;font-size:11px;color:#c8c8c8;letter-spacing:-0.80px">Pcx</span>
<span class="t" style="left:158.0px;top:4.5px;font-size:11px;color:#c8c8c8;letter-spacing:-0.20px">Chr</span>
<svg class="a" style="left:249px;top:6px" width="14" height="12" viewBox="0 0 14 12"><path d="M1 1.5H11M1 4.5H11M1 7.5H11M1 10.5H11" stroke="#ddd" stroke-width="1.5"/><rect x="12" y="9.5" width="1.5" height="1.5" fill="#ddd"/></svg>
<svg class="a" style="left:11px;top:36px" width="60" height="50" viewBox="1108 138 60 50">
<circle cx="1124.9" cy="155.5" r="12" fill="#000" stroke="#555" stroke-width="1.3"/>
<circle cx="1137" cy="168" r="12" fill="#ff0000" stroke="#505050" stroke-width="1.6"/>
<circle cx="1118.9" cy="174" r="5.6" fill="#fafafa" stroke="#111" stroke-width="1"/>
<path d="M1115.5 177.5 L1122.5 170.5" stroke="#ff5050" stroke-width="1.5"/>
<path d="M1138.2 145.8 C1142.5 145.5 1146.5 148.5 1146.8 153" fill="none" stroke="#e0e0e0" stroke-width="1.2"/>
<path d="M1140.6 143.4 L1138 145.8 L1140.8 148 M1144.2 151.2 L1146.8 153.6 L1149.2 151" fill="none" stroke="#e0e0e0" stroke-width="1.1"/>
</svg>
<svg class="a" style="left:62px;top:39px" width="18" height="18" viewBox="0 0 18 18">
<path d="M1 17 L2 13 L9 6 L12 9 L5 16Z" fill="#909090"/><path d="M8 5 L13 10" stroke="#bbb" stroke-width="1.5"/><circle cx="13" cy="5" r="3.5" fill="#b8862a"/><path d="M10 4 L14 8" stroke="#8a5a10" stroke-width="2"/>
</svg>
<div class="a" style="left:83px;top:41px;width:15px;height:15px;border-radius:50%;background:#ff0000;border:1.5px solid #555"></div>
<div class="dd" style="left:179px;top:64px;width:80px;height:17px;background:#3a3a3a;border-color:#2c2c2c"></div>
<span class="t" style="left:183.4px;top:66px;font-size:10.5px;letter-spacing:-0.67px">RVB Hex</span>
<svg class="a" style="left:246px;top:71px" width="8" height="5" viewBox="0 0 8 5"><path d="M0 0 L8 0 L4 4Z" fill="#ddd"/></svg>
<span class="t" style="left:13px;top:89.5px;font-size:10.5px">R:</span><div class="a" style="left:27.5px;top:91.0px;width:187px;height:8px;border-radius:4px;background:linear-gradient(90deg,#000,#ff0000);box-shadow:0 0 0 1px #333"></div><div class="a" style="left:203.0px;top:89.5px;width:12px;height:12px;border-radius:50%;background:#ff0000;border:1.5px solid #f0f0f0;box-shadow:0 0 0 1px #3a3a3a"></div><div class="a" style="left:219px;top:85.5px;width:40px;height:20px;background:#363636;border:1px solid #2c2c2c;border-radius:3px"></div><span class="t" style="left:224px;top:88.5px;font-size:11.5px;letter-spacing:-0.2px">FF</span>
<span class="t" style="left:13px;top:113.5px;font-size:10.5px">V:</span><div class="a" style="left:27.5px;top:115.0px;width:187px;height:8px;border-radius:4px;background:linear-gradient(90deg,#ff0000,#ffff00);box-shadow:0 0 0 1px #333"></div><div class="a" style="left:26.2px;top:113.3px;width:12px;height:12px;border-radius:50%;background:#ff0000;border:1.5px solid #f0f0f0;box-shadow:0 0 0 1px #3a3a3a"></div><div class="a" style="left:219px;top:109.5px;width:40px;height:20px;background:#363636;border:1px solid #2c2c2c;border-radius:3px"></div><span class="t" style="left:224px;top:112.5px;font-size:11.5px;letter-spacing:-0.2px">00</span>
<span class="t" style="left:13px;top:137.5px;font-size:10.5px">B:</span><div class="a" style="left:27.5px;top:139.0px;width:187px;height:8px;border-radius:4px;background:linear-gradient(90deg,#ff0000,#ff00ff);box-shadow:0 0 0 1px #333"></div><div class="a" style="left:26.2px;top:137.3px;width:12px;height:12px;border-radius:50%;background:#ff0000;border:1.5px solid #f0f0f0;box-shadow:0 0 0 1px #3a3a3a"></div><div class="a" style="left:219px;top:133.5px;width:40px;height:20px;background:#363636;border:1px solid #2c2c2c;border-radius:3px"></div><span class="t" style="left:224px;top:136.5px;font-size:11.5px;letter-spacing:-0.2px">00</span>
<span class="t" style="left:169px;top:160px;font-size:10.5px">#:</span>
<div class="a" style="left:179px;top:157.5px;width:80px;height:18px;background:#363636;border:1px solid #2c2c2c;border-radius:3px"></div>
<span class="t" style="left:180.8px;top:159.5px;font-size:11px;letter-spacing:-0.76px">FF0000</span>
<div class="a" style="left:13.5px;top:183.5px;width:246px;height:31px;border-radius:2px;background:linear-gradient(180deg,rgba(255,255,255,1) 0%,rgba(255,255,255,0) 50%,rgba(0,0,0,0) 50%,rgba(0,0,0,1) 100%),linear-gradient(90deg,#ff0000 0%,#ffff00 17%,#00ff00 33%,#00ffff 50%,#0000ff 67%,#ff00ff 83%,#ff0000 100%);box-shadow:0 0 0 1px #2a2a2a"></div>
<div class="a" style="left:8px;top:193.5px;width:12px;height:12px;border-radius:50%;border:1.8px solid #eee;box-shadow:0 0 0 1px #555"></div>
<span class="t" style="left:14px;top:219px;font-size:11px;color:#e0e0e0;letter-spacing:-0.2px">Opacité</span>
<div class="a" style="left:19px;top:235.5px;width:14px;height:14px;border-radius:50%;background:#ff0000;border:1.5px solid #2e2e2e"></div>
<div class="a" style="left:40px;top:239px;width:151px;height:8px;border-radius:4px;background:linear-gradient(90deg,rgba(255,255,255,1),rgba(255,255,255,0.0)),repeating-conic-gradient(#5a5a5a 0 25%,#3c3c3c 0 50%) 0 0/6px 6px;"></div>
<div class="a" style="left:179px;top:236.5px;width:12px;height:12px;border-radius:50%;background:#3a3a3a;border:1.5px solid #f0f0f0;box-shadow:0 0 0 1px #333"></div>
<div class="a" style="left:195px;top:231.5px;width:60px;height:19px;background:#363636;border:1px solid #2c2c2c;border-radius:3px"></div>
<div class="a" style="left:240px;top:232px;width:1px;height:18px;background:#2c2c2c"></div>
<span class="t" style="left:201px;top:235px;font-size:11.5px;letter-spacing:-0.3px">100 %</span>
<svg class="a" style="left:244px;top:239.5px" width="8" height="5" viewBox="0 0 8 5"><path d="M0 0 L8 0 L4 4Z" fill="#ddd"/></svg>
<div class="a" style="left:0;top:259px;width:269px;height:1px;background:#2c2c2c"></div>
<div class="a" style="left:0;top:260px;width:269px;height:24px;background:#2a2a2a"></div>
<div class="a" style="left:7px;top:267px;width:1px;height:9px;background:#777"></div><div class="a" style="left:10px;top:267px;width:1px;height:9px;background:#777"></div>
<div class="a" style="left:67.5px;top:261.5px;width:48px;height:22.5px;background:#434343"></div>
<span class="t" style="left:22.6px;top:264.5px;font-size:11px;color:#c8c8c8;letter-spacing:-0.33px">Réglage</span>
<span class="t" style="left:72.4px;top:264.5px;font-size:11px;color:#f0f0f0;letter-spacing:-0.50px">Calques</span>
<span class="t" style="left:119.8px;top:264.5px;font-size:11px;color:#c8c8c8;letter-spacing:-0.28px">Effets</span>
<span class="t" style="left:156.2px;top:264.5px;font-size:11px;color:#c8c8c8;letter-spacing:-0.24px">Styles</span>
<span class="t" style="left:194.8px;top:264.5px;font-size:11px;color:#c8c8c8;letter-spacing:-0.26px">Stock</span>
<svg class="a" style="left:249px;top:266px" width="14" height="12" viewBox="0 0 14 12"><path d="M1 1.5H11M1 4.5H11M1 7.5H11M1 10.5H11" stroke="#ddd" stroke-width="1.5"/><rect x="12" y="9.5" width="1.5" height="1.5" fill="#ddd"/></svg>
<span class="t" style="left:8.2px;top:293px;font-size:10.5px;letter-spacing:-0.34px">Opacité:</span>
<div class="a" style="left:48.5px;top:288.5px;width:74px;height:19px;background:#323232;border:1px solid #2a2a2a;border-radius:3px"></div>
<span class="t" style="left:54px;top:291.5px;font-size:11.5px;letter-spacing:-0.3px">100 %</span>
<svg class="a" style="left:111px;top:296px" width="8" height="5" viewBox="0 0 8 5"><path d="M0 0 L8 0 L4 4Z" fill="#ddd"/></svg>
<div class="a" style="left:127.5px;top:288.5px;width:101px;height:19px;background:#3a3a3a;border:1px solid #2a2a2a;border-radius:3px"></div>
<span class="t" style="left:132.0px;top:292px;font-size:12px;letter-spacing:-0.32px">Normal</span>
<svg class="a" style="left:217px;top:296px" width="8" height="5" viewBox="0 0 8 5"><path d="M0 0 L8 0 L4 4Z" fill="#ddd"/></svg>
<svg class="a" style="left:232px;top:292px" width="12" height="12" viewBox="0 0 12 12"><circle cx="6" cy="6" r="4.2" fill="none" stroke="#999" stroke-width="2.6" stroke-dasharray="2 1.3"/><circle cx="6" cy="6" r="3" fill="none" stroke="#999" stroke-width="1.5"/></svg>
<svg class="a" style="left:251px;top:291px" width="10" height="13" viewBox="0 0 10 13"><path d="M2.5 6 V4 A2.5 2.5 0 0 1 7.5 4 V6" fill="none" stroke="#888" stroke-width="1.5"/><rect x="1" y="6" width="8" height="6.5" fill="#888"/></svg>
<div class="a" style="left:0;top:312px;width:269px;height:141px;background:#343434;border-top:1px solid #2a2a2a"></div>
<div class="a" style="left:0;top:341px;width:269px;height:27px;background:#5f8ece"></div>
<div class="a" style="left:0;top:340px;width:269px;height:1px;background:#2a2a2a"></div>
<svg class="a" style="left:23px;top:315px" width="23" height="23" viewBox="0 0 23 23"><rect x="0.5" y="0.5" width="22" height="22" fill="#2a2a2a" stroke="#111" stroke-width="1"/><path d="M11.5 1.5 C10 5 5.5 11.5 5.5 16 A6 6 0 0 0 17.5 16 C17.5 11.5 13 5 11.5 1.5Z" fill="#ff0000"/></svg>
<span class="t" style="left:50px;top:320px;font-size:12px;color:#d8d8d8;letter-spacing:-0.2px">(Larme)</span>
<svg class="a" style="left:250px;top:321px" width="12" height="12" viewBox="0 0 12 12"><rect x="0.5" y="0.5" width="11" height="11" rx="1.5" fill="#555" stroke="#3a3a3a"/><path d="M2.5 6 L5 8.8 L9.8 2.5" fill="none" stroke="#fff" stroke-width="1.6"/></svg>
<svg class="a" style="left:23px;top:343.5px" width="23" height="23" viewBox="0 0 23 23"><rect x="0.5" y="0.5" width="22" height="22" fill="#2a2a2a" stroke="#111" stroke-width="1"/><path d="M11.5 1.5 C10 5 5.5 11.5 5.5 16 A6 6 0 0 0 17.5 16 C17.5 11.5 13 5 11.5 1.5Z" fill="#ff0000"/></svg>
<span class="t" style="left:50px;top:348.5px;font-size:12px;color:#d8d8d8;letter-spacing:-0.2px">(Larme)</span>
<svg class="a" style="left:250px;top:349.5px" width="12" height="12" viewBox="0 0 12 12"><rect x="0.5" y="0.5" width="11" height="11" rx="1.5" fill="#555" stroke="#3a3a3a"/><path d="M2.5 6 L5 8.8 L9.8 2.5" fill="none" stroke="#fff" stroke-width="1.6"/></svg>
<div class="a" style="left:0;top:453px;width:269px;height:20px;background:#3c3c3c"></div>
<svg class="a" style="left:1px;top:455px" width="16" height="16" viewBox="0 0 16 16"><rect width="16" height="16" fill="#2a2a2a"/><path d="M8 2.5 L14 5 L8 7.5 L2 5Z M2 8 L8 10.5 L14 8 M2 10.5 L8 13 L14 10.5" fill="none" stroke="#ccc" stroke-width="1.1"/></svg>
<svg class="a" style="left:76.5px;top:456px" width="15" height="14" viewBox="0 0 15 14"><rect width="15" height="14" fill="#c8c8c8"/><circle cx="7.5" cy="7" r="3.6" fill="#383838"/></svg>
<svg class="a" style="left:97px;top:456px" width="14" height="14" viewBox="0 0 14 14"><circle cx="7" cy="7" r="6" fill="#ddd"/><path d="M11 3 A6 6 0 0 1 3 11Z" fill="#333"/></svg>
<span class="t" style="left:115px;top:454px;font-size:15px;font-family:'Liberation Serif',serif;font-style:italic;color:#e4e4e4;letter-spacing:0.5px">fx</span>
<svg class="a" style="left:138px;top:456px" width="13" height="14" viewBox="0 0 13 14"><path d="M0 0 H13 L7.5 7 L13 14 H0 L5.5 7Z" fill="#ddd"/></svg>
<svg class="a" style="left:209px;top:456px" width="17" height="14" viewBox="0 0 17 14"><path d="M1 3 H6 L8 5 H16 V13 H1Z" fill="#888"/></svg>
<svg class="a" style="left:230px;top:454px" width="15" height="17" viewBox="0 0 15 17"><path d="M3 2 H10 L14 6 V16 H3Z" fill="#999"/><path d="M4 4h2v2h-2zM8 4h2v2h-2zM6 6h2v2h-2zM10 6h2v2h-2zM4 8h2v2h-2zM8 8h2v2h-2zM6 10h2v2h-2zM10 10h2v2h-2zM4 12h2v2h-2zM8 12h2v2h-2z" fill="#444"/><path d="M0 1H2M1 0V2" stroke="#ccc"/></svg>
<svg class="a" style="left:252px;top:455px" width="13" height="16" viewBox="0 0 13 16"><rect x="1" y="2" width="11" height="2" fill="#aaa"/><rect x="5" y="0.5" width="3" height="2" fill="#aaa"/><path d="M2 5 H11 L10 15.5 H3Z" fill="#aaa"/><path d="M5 6.5 V14 M8 6.5 V14" stroke="#3c3c3c" stroke-width="1"/></svg>
<div class="a" style="left:0;top:473px;width:269px;height:24px;background:#2a2a2a"></div>
<div class="a" style="left:7px;top:481px;width:1px;height:9px;background:#777"></div><div class="a" style="left:10px;top:481px;width:1px;height:9px;background:#777"></div>
<div class="a" style="left:82px;top:475px;width:67px;height:22px;background:#434343"></div>
<span class="t" style="left:22.6px;top:477.5px;font-size:11px;color:#c8c8c8;letter-spacing:0.03px">Navigateur</span>
<span class="t" style="left:86.2px;top:477.5px;font-size:11px;color:#f0f0f0;letter-spacing:-0.24px">Transformer</span>
<span class="t" style="left:154.0px;top:477.5px;font-size:11px;color:#c8c8c8;letter-spacing:0.11px">Historique</span>
<span class="t" style="left:214.2px;top:477.5px;font-size:11px;color:#c8c8c8;letter-spacing:-0.32px">Canaux</span>
<div class="a" style="left:27px;top:522px;width:29px;height:29px;background:#6a6a6a"></div>
<div class="a" style="left:21.1px;top:517.6px;width:9px;height:9px;background:#fff"></div>
<div class="a" style="left:22.6px;top:533.7px;width:6px;height:6px;background:#bdbdbd"></div>
<div class="a" style="left:22.6px;top:548.5px;width:6px;height:6px;background:#bdbdbd"></div>
<div class="a" style="left:38px;top:519.1px;width:6px;height:6px;background:#bdbdbd"></div>
<div class="a" style="left:38px;top:533.7px;width:6px;height:6px;background:#bdbdbd"></div>
<div class="a" style="left:38px;top:548.5px;width:6px;height:6px;background:#bdbdbd"></div>
<div class="a" style="left:53.1px;top:519.1px;width:6px;height:6px;background:#bdbdbd"></div>
<div class="a" style="left:53.1px;top:533.7px;width:6px;height:6px;background:#bdbdbd"></div>
<div class="a" style="left:53.1px;top:548.5px;width:6px;height:6px;background:#bdbdbd"></div>
<span class="t" style="left:79.5px;top:511.5px;font-size:11.5px">X:</span><div class="a" style="left:93px;top:508.5px;width:65px;height:20px;background:#323232;border:1px solid #2a2a2a;border-radius:3px"></div><span class="t" style="left:98px;top:511.5px;font-size:11.5px;letter-spacing:-0.2px">80 mm</span>
<span class="t" style="left:79.5px;top:535.5px;font-size:11.5px">Y:</span><div class="a" style="left:93px;top:532.5px;width:65px;height:20px;background:#323232;border:1px solid #2a2a2a;border-radius:3px"></div><span class="t" style="left:98px;top:535.5px;font-size:11.5px;letter-spacing:-0.2px">100.9 mm</span>
<span class="t" style="left:79.5px;top:565.5px;font-size:11.5px">R:</span><div class="a" style="left:93px;top:562.5px;width:65px;height:20px;background:#323232;border:1px solid #2a2a2a;border-radius:3px"></div><span class="t" style="left:98px;top:565.5px;font-size:11.5px;letter-spacing:-0.2px">0 °</span><svg class="a" style="left:144px;top:571.0px" width="8" height="5" viewBox="0 0 8 5"><path d="M0 0 L8 0 L4 4Z" fill="#ddd"/></svg>
<span class="t" style="left:170px;top:511.5px;font-size:11.5px">L:</span><div class="a" style="left:183px;top:508.5px;width:65px;height:20px;background:#323232;border:1px solid #2a2a2a;border-radius:3px"></div><span class="t" style="left:188px;top:511.5px;font-size:11.5px;letter-spacing:-0.2px">25 mm</span>
<span class="t" style="left:170px;top:535.5px;font-size:11.5px">T:</span><div class="a" style="left:183px;top:532.5px;width:65px;height:20px;background:#323232;border:1px solid #2a2a2a;border-radius:3px"></div><span class="t" style="left:188px;top:535.5px;font-size:11.5px;letter-spacing:-0.2px">47.6 mm</span>
<span class="t" style="left:170px;top:565.5px;font-size:11.5px">S:</span><div class="a" style="left:183px;top:562.5px;width:65px;height:20px;background:#323232;border:1px solid #2a2a2a;border-radius:3px"></div><span class="t" style="left:188px;top:565.5px;font-size:11.5px;letter-spacing:-0.2px">0 °</span><svg class="a" style="left:234px;top:571.0px" width="8" height="5" viewBox="0 0 8 5"><path d="M0 0 L8 0 L4 4Z" fill="#ddd"/></svg>
<svg class="a" style="left:249px;top:519px" width="12" height="24" viewBox="0 0 12 24"><path d="M0 0.5 H4 V5 M4 19 V23.5 H0" fill="none" stroke="#888" stroke-width="1"/><rect x="3" y="5.5" width="5" height="6" rx="2.5" fill="none" stroke="#aaa" stroke-width="1.3"/><rect x="3" y="12.5" width="5" height="6" rx="2.5" fill="none" stroke="#aaa" stroke-width="1.3"/></svg></div>
<div id="status" class="a">
  <span class="s" style="position:absolute;white-space:nowrap;left:5px;top:7px;font-size:12px;line-height:14px;letter-spacing:-0.08px;color:#c4c4c4">"Larme" sélectionné(s). <b style="color:#f4f4f4">Glisser</b> pour déplacer la sélection. <b style="color:#f4f4f4">Cliquer</b> sur un autre objet pour le sélectionner. <b style="color:#f4f4f4">Cliquer</b> sur une zone vide pour annuler la sélection.</span>
</div>
<svg class="a" style="left:0;top:0;pointer-events:none" width="1366" height="728" viewBox="0 0 1366 728">
<defs><filter id="sh" x="-10%" y="-10%" width="120%" height="130%"><feDropShadow dx="1" dy="2" stdDeviation="1.5" flood-color="#000" flood-opacity="0.45"/></filter></defs>
<g filter="url(#sh)">
<path d="M981 543.6 L1232 620" stroke="#ff0000" stroke-width="3.2" stroke-linecap="round"/>
<path d="M1255 627 L1233 613 L1229 626.4Z" fill="#ff0000"/>
<rect x="1260.5" y="604.5" width="102" height="59" fill="none" stroke="#ff0000" stroke-width="3"/>
</g>
</svg>
</body></html>
